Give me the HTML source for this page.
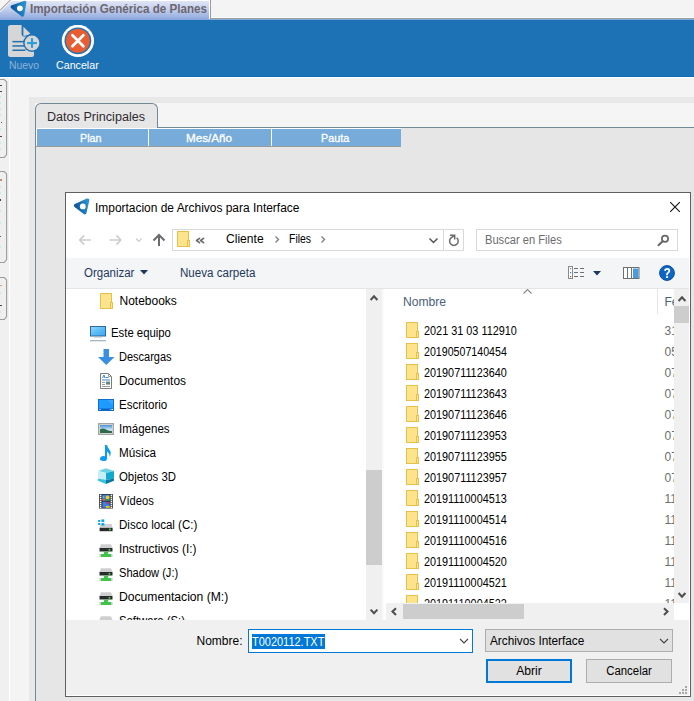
<!DOCTYPE html>
<html><head><meta charset="utf-8"><style>
html,body{margin:0;padding:0;}
body{width:694px;height:701px;position:relative;overflow:hidden;background:#f4f4f4;font-family:"Liberation Sans", sans-serif;}
.t{position:absolute;white-space:nowrap;line-height:1;}
svg{display:block}
</style></head><body>
<div style="position:absolute;left:0px;top:0px;width:694px;height:18px;background:#f4f4f4"></div>
<div style="position:absolute;left:211px;top:17px;width:483px;height:1px;background:#ffffff"></div>
<div style="position:absolute;left:210px;top:18px;width:484px;height:1px;background:#a19e9a"></div>
<svg style="position:absolute;left:0;top:0" width="212" height="20">
<defs><linearGradient id="tg" x1="0" y1="0" x2="0" y2="1">
<stop offset="0" stop-color="#e3e8f6"/><stop offset="0.5" stop-color="#c0cdec"/><stop offset="1" stop-color="#8ba6dc"/></linearGradient></defs>
<polygon points="0,11 11,0 209,0 209,20 0,20" fill="url(#tg)"/>
<polygon points="0,0 11,0 0,11" fill="#f4f4f4"/>
<line x1="11.5" y1="0.5" x2="209" y2="0.5" stroke="#ffffff" stroke-width="1"/>
<line x1="0.3" y1="11.9" x2="11.9" y2="0.3" stroke="#ffffff" stroke-width="1" opacity="0.8"/>
<line x1="-0.3" y1="10.7" x2="10.7" y2="-0.3" stroke="#7a7a7a" stroke-width="0.9"/>
<rect x="209" y="1" width="1" height="17" fill="#ffffff"/>
<rect x="210" y="0" width="1" height="19" fill="#9d9a97"/>
</svg>
<svg style="position:absolute;left:8px;top:0px" width="22" height="20" viewBox="0 0 22 20">
<defs><linearGradient id="ig1" x1="0" y1="0.2" x2="1" y2="0"><stop offset="0" stop-color="#0b5aa3"/><stop offset="1" stop-color="#2b93cc"/></linearGradient></defs>
<polygon points="4.3,6.9 16.6,2.6 14.5,15" fill="url(#ig1)" stroke="url(#ig1)" stroke-width="3.5" stroke-linejoin="round"/>
<circle cx="11.9" cy="8.3" r="2.9" fill="#fff"/>
</svg>
<div class="t" style="left:30.3px;top:3.42px;font-size:12.5px;color:#6c6670;font-weight:bold;transform:scaleX(0.9298);transform-origin:0 0;">Importación Genérica de Planes</div>
<div style="position:absolute;left:0px;top:19px;width:694px;height:1px;background:#86a8dc"></div>
<div style="position:absolute;left:0px;top:20px;width:694px;height:56px;background:#1d72b5"></div>
<div style="position:absolute;left:0px;top:76px;width:694px;height:1px;background:#1169b0"></div>
<div style="position:absolute;left:0px;top:77px;width:694px;height:1px;background:#ffffff"></div>
<svg style="position:absolute;left:7px;top:24px" width="34" height="34" viewBox="0 0 34 34">
<path d="M3.5 1 H14.6 V10.6 Q14.6 12.4 16.4 12.4 H27 V31 Q27 33 25 33 H3.5 Q1 33 1 30.5 V3.5 Q1 1 3.5 1 Z" fill="#d6d6d6"/>
<path d="M16.4 2.8 L23.3 9.6 Q22 11.2 16.4 12 Z" fill="#d6d6d6"/>
<rect x="5.4" y="16.9" width="12" height="1.5" fill="#1d72b5"/>
<rect x="5.4" y="21.2" width="12" height="1.5" fill="#1d72b5"/>
<rect x="5.4" y="25.5" width="13" height="1.5" fill="#1d72b5"/>
<circle cx="25" cy="19" r="8.9" fill="#1d72b5"/>
<circle cx="25" cy="19" r="7.4" fill="#d6d6d6"/>
<rect x="20.1" y="18" width="9.8" height="2.1" fill="#28a0dc"/>
<rect x="23.95" y="14.1" width="2.1" height="9.8" fill="#28a0dc"/>
</svg>
<div class="t" style="left:8.7px;top:59.69px;font-size:11px;color:#8db3d9;font-weight:normal;transform:scaleX(0.9435);transform-origin:0 0;">Nuevo</div>
<svg style="position:absolute;left:61px;top:25px" width="33" height="33" viewBox="0 0 33 33">
<circle cx="16.9" cy="15.8" r="16.1" fill="#ffffff"/>
<circle cx="16.9" cy="15.8" r="13.4" fill="#1d72b5"/>
<circle cx="16.9" cy="15.8" r="12" fill="#e95d33"/>
<path d="M11.4 10.3 L22.4 21.3 M22.4 10.3 L11.4 21.3" stroke="#fff" stroke-width="2.7" stroke-linecap="round"/>
</svg>
<div class="t" style="left:56.3px;top:59.69px;font-size:11px;color:#ffffff;font-weight:normal;transform:scaleX(0.9698);transform-origin:0 0;">Cancelar</div>
<div style="position:absolute;left:0px;top:78px;width:9px;height:623px;background:#f0f0f0"></div>
<svg style="position:absolute;left:0;top:79px" width="9" height="79"><path d="M-2 0.5 H4.2 L6.6 2.9 V75.6 L4.2 78.5 H-2" fill="#efefef" stroke="#9c9c9c" stroke-width="1.1"/></svg>
<svg style="position:absolute;left:0;top:171px" width="9" height="92"><path d="M-2 0.5 H4.2 L6.6 2.9 V88.6 L4.2 91.5 H-2" fill="#efefef" stroke="#9c9c9c" stroke-width="1.1"/></svg>
<svg style="position:absolute;left:0;top:277px" width="9" height="43"><path d="M-2 0.5 H4.2 L6.6 2.9 V39.6 L4.2 42.5 H-2" fill="#efefef" stroke="#9c9c9c" stroke-width="1.1"/></svg>
<div style="position:absolute;left:9px;top:78px;width:1px;height:623px;background:#ffffff"></div>
<div style="position:absolute;left:0px;top:85px;width:2px;height:1px;background:#454a5a"></div>
<div style="position:absolute;left:0px;top:91px;width:2px;height:1px;background:#454a5a"></div>
<div style="position:absolute;left:1px;top:122px;width:1px;height:1px;background:#6a4a6a"></div>
<div style="position:absolute;left:0px;top:136px;width:2px;height:1px;background:#454a5a"></div>
<div style="position:absolute;left:0px;top:96px;width:1px;height:2px;background:#bdeef0"></div>
<div style="position:absolute;left:0px;top:102px;width:1px;height:2px;background:#bdeef0"></div>
<div style="position:absolute;left:0px;top:108px;width:1px;height:2px;background:#bdeef0"></div>
<div style="position:absolute;left:0px;top:114px;width:1px;height:2px;background:#bdeef0"></div>
<div style="position:absolute;left:0px;top:128px;width:1px;height:2px;background:#bdeef0"></div>
<div style="position:absolute;left:0px;top:142px;width:1px;height:2px;background:#bdeef0"></div>
<div style="position:absolute;left:0px;top:148px;width:1px;height:2px;background:#bdeef0"></div>
<div style="position:absolute;left:0px;top:179px;width:2px;height:2px;background:#c09070"></div>
<div style="position:absolute;left:0px;top:199px;width:1px;height:2px;background:#404a48"></div>
<div style="position:absolute;left:0px;top:186px;width:1px;height:2px;background:#bdeef0"></div>
<div style="position:absolute;left:0px;top:192px;width:1px;height:2px;background:#bdeef0"></div>
<div style="position:absolute;left:0px;top:210px;width:1px;height:2px;background:#bdeef0"></div>
<div style="position:absolute;left:0px;top:222px;width:1px;height:2px;background:#bdeef0"></div>
<div style="position:absolute;left:0px;top:236px;width:1px;height:1px;background:#606060"></div>
<div style="position:absolute;left:0px;top:246px;width:1px;height:2px;background:#bdeef0"></div>
<div style="position:absolute;left:0px;top:285px;width:2px;height:1px;background:#d0a070"></div>
<div style="position:absolute;left:0px;top:305px;width:2px;height:1px;background:#404a5a"></div>
<div style="position:absolute;left:0px;top:292px;width:1px;height:2px;background:#bdeef0"></div>
<div style="position:absolute;left:0px;top:311px;width:1px;height:2px;background:#bdeef0"></div>
<div style="position:absolute;left:29px;top:97px;width:665px;height:604px;background:#e8e8e8"></div>
<div style="position:absolute;left:35px;top:103px;width:659px;height:24px;background:#f5f5f5"></div>
<div style="position:absolute;left:35px;top:127px;width:659px;height:574px;background:#e6e6e6;border-left:1px solid #728a94;border-top:1px solid #728a94"></div>
<div style="position:absolute;left:35px;top:103px;width:123px;height:26px;background:#e6e6e6;border:1px solid #728a94;border-bottom:none;border-radius:6px 6px 0 0;box-sizing:border-box"></div>
<div class="t" style="left:46.5px;top:111.12px;font-size:12.5px;color:#302b33;font-weight:normal;transform:scaleX(1.0076);transform-origin:0 0;">Datos Principales</div>
<div style="position:absolute;left:36px;top:128px;width:365px;height:1px;background:#ffffff"></div>
<div style="position:absolute;left:36px;top:128px;width:1px;height:18px;background:#ffffff"></div>
<div style="position:absolute;left:37px;top:129px;width:364px;height:17px;background:#76abda"></div>
<div style="position:absolute;left:36px;top:146px;width:365px;height:1px;background:#9c9c9c"></div>
<div style="position:absolute;left:148px;top:129px;width:1px;height:17px;background:#ffffff"></div>
<div style="position:absolute;left:271px;top:129px;width:1px;height:17px;background:#ffffff"></div>
<div class="t" style="left:80px;top:132.79px;font-size:11px;color:#ffffff;font-weight:normal;transform:scaleX(0.9804);transform-origin:0 0;-webkit-text-stroke:0.3px #fff">Plan</div>
<div class="t" style="left:186px;top:132.79px;font-size:11px;color:#ffffff;font-weight:normal;transform:scaleX(1.0594);transform-origin:0 0;-webkit-text-stroke:0.3px #fff">Mes/Año</div>
<div class="t" style="left:321.4px;top:132.79px;font-size:11px;color:#ffffff;font-weight:normal;transform:scaleX(0.9809);transform-origin:0 0;-webkit-text-stroke:0.3px #fff">Pauta</div>
<div style="position:absolute;left:65px;top:192px;width:626px;height:505px;background:#f0f0f0;border:1px solid #606060;box-sizing:border-box"></div>
<div style="position:absolute;left:66px;top:193px;width:624px;height:96px;background:#ffffff"></div>
<svg style="position:absolute;left:71px;top:197px" width="22" height="20" viewBox="0 0 22 20">
<defs><linearGradient id="ig2" x1="0" y1="0.2" x2="1" y2="0"><stop offset="0" stop-color="#0b5aa3"/><stop offset="1" stop-color="#2b93cc"/></linearGradient></defs>
<polygon points="4.6,8.6 16.6,3.2 13.8,15.6" fill="url(#ig2)" stroke="url(#ig2)" stroke-width="3.5" stroke-linejoin="round"/>
<circle cx="11.8" cy="9.4" r="2.9" fill="#fff"/>
</svg>
<div class="t" style="left:94.6px;top:201.84px;font-size:12px;color:#000;font-weight:normal;transform:scaleX(0.9949);transform-origin:0 0;">Importacion de Archivos para Interface</div>
<svg style="position:absolute;left:669px;top:201px" width="13" height="13"><path d="M1.2 1.2 L10.8 10.8 M10.8 1.2 L1.2 10.8" stroke="#111" stroke-width="1.1"/></svg>
<svg style="position:absolute;left:76px;top:232px" width="96" height="16">
<path d="M3.5 8 H15 M3.5 8 L8.2 3.3 M3.5 8 L8.2 12.7" stroke="#cdcdcd" stroke-width="1.7" fill="none"/>
<path d="M45 8 H33.5 M45 8 L40.3 3.3 M45 8 L40.3 12.7" stroke="#cdcdcd" stroke-width="1.7" fill="none"/>
<path d="M60 6.5 L62.8 9.3 L65.6 6.5" stroke="#cdcdcd" stroke-width="1.2" fill="none"/>
<path d="M83 14 V3.5 M77.5 8.5 L83 3 L88.5 8.5" stroke="#6b6b6b" stroke-width="2" fill="none"/>
</svg>
<div style="position:absolute;left:172px;top:229px;width:292px;height:22px;background:#fff;border:1px solid #d9d9d9;box-sizing:border-box"></div>
<div style="position:absolute;left:443px;top:230px;width:1px;height:20px;background:#d9d9d9"></div>
<svg style="position:absolute;left:177px;top:231px" width="15" height="17" viewBox="0 0 15 17">
<rect x="0.5" y="0.5" width="11" height="15" fill="#fde38c" stroke="#e6c14a" stroke-width="1"/>
<rect x="10.5" y="9.5" width="2" height="6" fill="#fde38c" stroke="#e6c14a" stroke-width="1"/>
</svg>
<svg style="position:absolute;left:195px;top:237px" width="10" height="8"><path d="M4.5 1.3 L1.5 3.5 L4.5 5.7 M8.6 1.3 L5.6 3.5 L8.6 5.7" stroke="#6a6a6a" stroke-width="1.6" stroke-linejoin="round" stroke-linecap="round" fill="none"/></svg>
<div class="t" style="left:226.2px;top:232.84px;font-size:12px;color:#000;font-weight:normal;transform:scaleX(1.0064);transform-origin:0 0;">Cliente</div>
<svg style="position:absolute;left:274px;top:235px" width="54" height="10">
<path d="M1.5 1.5 L4.5 4.5 L1.5 7.5" stroke="#808080" stroke-width="1.4" fill="none"/>
<path d="M47.5 1.5 L50.5 4.5 L47.5 7.5" stroke="#808080" stroke-width="1.4" fill="none"/>
</svg>
<div class="t" style="left:289.4px;top:232.84px;font-size:12px;color:#000;font-weight:normal;transform:scaleX(0.8720);transform-origin:0 0;">Files</div>
<svg style="position:absolute;left:428px;top:237px" width="12" height="8"><path d="M1.5 1.5 L5.5 5.5 L9.5 1.5" stroke="#555" stroke-width="1.5" fill="none"/></svg>
<svg style="position:absolute;left:447px;top:233px" width="14" height="14" viewBox="0 0 14 14">
<path d="M9.66 4.8 A4.3 4.3 0 1 1 4.14 4.81 L7.4 2.6" stroke="#6b6b6b" stroke-width="1.5" fill="none"/>
<path d="M3 2.3 H7.7 V6.4" stroke="#6b6b6b" stroke-width="1.5" fill="none"/>
</svg>
<div style="position:absolute;left:476px;top:229px;width:202px;height:22px;background:#fff;border:1px solid #d9d9d9;box-sizing:border-box"></div>
<div class="t" style="left:485.2px;top:233.84px;font-size:12px;color:#6d6d6d;font-weight:normal;transform:scaleX(0.9274);transform-origin:0 0;">Buscar en Files</div>
<svg style="position:absolute;left:657px;top:234px" width="13" height="13" viewBox="0 0 13 13">
<circle cx="8" cy="4.7" r="3.1" stroke="#666" stroke-width="1.7" fill="none"/>
<path d="M5.6 7.2 L1.5 11.3" stroke="#666" stroke-width="2" stroke-linecap="round"/>
</svg>
<div style="position:absolute;left:66px;top:258px;width:624px;height:30px;background:#f4f5f7"></div>
<div style="position:absolute;left:66px;top:288px;width:624px;height:1px;background:#e3e5e8"></div>
<div class="t" style="left:84.4px;top:266.84px;font-size:12px;color:#1e395b;font-weight:normal;transform:scaleX(0.9566);transform-origin:0 0;">Organizar</div>
<svg style="position:absolute;left:140px;top:270px" width="9" height="5"><path d="M0 0 H8 L4 4.5 Z" fill="#1e395b"/></svg>
<div class="t" style="left:179.5px;top:266.84px;font-size:12px;color:#1e395b;font-weight:normal;transform:scaleX(0.9661);transform-origin:0 0;">Nueva carpeta</div>
<svg style="position:absolute;left:568px;top:266px" width="17" height="13" viewBox="0 0 17 13">
<rect x="0.5" y="0.5" width="4" height="12" fill="#fff" stroke="#8a8a8a" stroke-width="1"/>
<rect x="2" y="2" width="1.2" height="1.2" fill="#888"/>
<rect x="2" y="6" width="1.2" height="1.2" fill="#2f7fd0"/>
<rect x="2" y="10" width="1.2" height="1.2" fill="#d03030"/>
<rect x="6" y="2" width="4" height="1" fill="#707070"/><rect x="12" y="2" width="4" height="1" fill="#707070"/>
<rect x="6" y="6" width="4" height="1" fill="#707070"/><rect x="12" y="6" width="4" height="1" fill="#707070"/>
<rect x="6" y="10" width="4" height="1" fill="#707070"/><rect x="12" y="10" width="4" height="1" fill="#707070"/>
</svg>
<svg style="position:absolute;left:593px;top:271px" width="9" height="5"><path d="M0 0 H8 L4 4.5 Z" fill="#1e395b"/></svg>
<svg style="position:absolute;left:623px;top:267px" width="17" height="12" viewBox="0 0 17 12">
<rect x="0.5" y="0.5" width="15.5" height="11" fill="#fff" stroke="#707070" stroke-width="1"/>
<rect x="4" y="1" width="1" height="10" fill="#707070"/>
<rect x="8" y="1" width="1" height="10" fill="#707070"/>
<rect x="10" y="1.5" width="5.5" height="9.5" fill="#4a9ae0"/>
</svg>
<svg style="position:absolute;left:659px;top:265px" width="16" height="16" viewBox="0 0 16 16">
<circle cx="8" cy="8" r="7.4" fill="#0d66c6" stroke="#0a4c9c" stroke-width="1"/>
<path d="M6 5.8 Q6.2 3.9 8.2 3.9 Q10.3 3.9 10.3 5.8 Q10.3 7 9.1 7.7 Q8 8.3 8 9.6 V10.2" stroke="#fff" stroke-width="1.8" fill="none"/>
<rect x="7" y="11.2" width="2.1" height="1.8" fill="#fff"/>
</svg>
<div style="position:absolute;left:66px;top:289px;width:300px;height:331px;background:#fff"></div>
<div style="position:absolute;left:366px;top:289px;width:16px;height:331px;background:#f0f0f0"></div>
<div style="position:absolute;left:366px;top:470px;width:16px;height:95px;background:#cdcdcd"></div>
<svg style="position:absolute;left:366px;top:289px" width="16" height="331">
<path d="M4.6 11 L8 7.4 L11.4 11" stroke="#505050" stroke-width="2.1" fill="none"/>
<path d="M4.6 320.6 L8 324.2 L11.4 320.6" stroke="#505050" stroke-width="2.1" fill="none"/>
</svg>
<div style="position:absolute;left:382px;top:289px;width:2px;height:331px;background:#fafafa"></div>
<div style="position:absolute;left:384px;top:289px;width:306px;height:314px;background:#fff"></div>
<div style="position:absolute;left:674px;top:289px;width:16px;height:314px;background:#f0f0f0"></div>
<div style="position:absolute;left:674px;top:306px;width:16px;height:17px;background:#cdcdcd"></div>
<svg style="position:absolute;left:674px;top:289px" width="16" height="314">
<path d="M4.6 12 L8 8.4 L11.4 12" stroke="#505050" stroke-width="2.1" fill="none"/>
<path d="M4.6 304 L8 307.8 L11.4 304" stroke="#505050" stroke-width="2.1" fill="none"/>
</svg>
<div style="position:absolute;left:386px;top:604px;width:288px;height:16px;background:#f0f0f0"></div>
<div style="position:absolute;left:403px;top:604px;width:121px;height:15px;background:#cdcdcd"></div>
<div style="position:absolute;left:674px;top:603px;width:16px;height:17px;background:#fff"></div>
<div style="position:absolute;left:384px;top:603px;width:2px;height:17px;background:#fff"></div>
<svg style="position:absolute;left:386px;top:604px" width="288" height="16">
<path d="M10 4.2 L6.5 7.6 L10 11" stroke="#505050" stroke-width="2.1" fill="none"/>
<path d="M278 4.2 L281.5 7.6 L278 11" stroke="#505050" stroke-width="2.1" fill="none"/>
</svg>
<div style="position:absolute;left:384px;top:289px;width:290px;height:314px;overflow:hidden">
<div class="t" style="left:18.600000000000023px;top:6.84px;font-size:12px;color:#4c607a;font-weight:normal;transform:scaleX(1.0097);transform-origin:0 0;">Nombre</div>
<svg style="position:absolute;left:138px;top:-1px" width="11" height="7"><path d="M1.5 5.5 L5.5 1.5 L9.5 5.5" stroke="#8a8a8a" stroke-width="1.1" fill="none"/></svg>
<div style="position:absolute;left:273px;top:0px;width:1px;height:25px;background:#e5e5e5"></div>
<div class="t" style="left:280.5px;top:6.84px;font-size:12px;color:#4c607a;font-weight:normal;">Fe</div>
<svg style="position:absolute;left:22px;top:33px" width="15" height="17" viewBox="0 0 15 17">
<rect x="0.5" y="0.5" width="11" height="15" fill="#fde38c" stroke="#e6c14a" stroke-width="1"/>
<rect x="10.5" y="9.5" width="2" height="6" fill="#fde38c" stroke="#e6c14a" stroke-width="1"/>
</svg>
<div class="t" style="left:40.19999999999999px;top:36.44px;font-size:12px;color:#000;font-weight:normal;transform:scaleX(0.9059);transform-origin:0 0;">2021 31 03 112910</div>
<div class="t" style="left:280.5px;top:36.44px;font-size:12px;color:#6d6d6d;font-weight:normal;">31</div>
<svg style="position:absolute;left:22px;top:54px" width="15" height="17" viewBox="0 0 15 17">
<rect x="0.5" y="0.5" width="11" height="15" fill="#fde38c" stroke="#e6c14a" stroke-width="1"/>
<rect x="10.5" y="9.5" width="2" height="6" fill="#fde38c" stroke="#e6c14a" stroke-width="1"/>
</svg>
<div class="t" style="left:40.19999999999999px;top:57.44px;font-size:12px;color:#000;font-weight:normal;transform:scaleX(0.8862);transform-origin:0 0;">20190507140454</div>
<div class="t" style="left:280.5px;top:57.44px;font-size:12px;color:#6d6d6d;font-weight:normal;">05</div>
<svg style="position:absolute;left:22px;top:75px" width="15" height="17" viewBox="0 0 15 17">
<rect x="0.5" y="0.5" width="11" height="15" fill="#fde38c" stroke="#e6c14a" stroke-width="1"/>
<rect x="10.5" y="9.5" width="2" height="6" fill="#fde38c" stroke="#e6c14a" stroke-width="1"/>
</svg>
<div class="t" style="left:40.19999999999999px;top:78.44px;font-size:12px;color:#000;font-weight:normal;transform:scaleX(0.9034);transform-origin:0 0;">20190711123640</div>
<div class="t" style="left:280.5px;top:78.44px;font-size:12px;color:#6d6d6d;font-weight:normal;">07</div>
<svg style="position:absolute;left:22px;top:96px" width="15" height="17" viewBox="0 0 15 17">
<rect x="0.5" y="0.5" width="11" height="15" fill="#fde38c" stroke="#e6c14a" stroke-width="1"/>
<rect x="10.5" y="9.5" width="2" height="6" fill="#fde38c" stroke="#e6c14a" stroke-width="1"/>
</svg>
<div class="t" style="left:40.19999999999999px;top:99.44px;font-size:12px;color:#000;font-weight:normal;transform:scaleX(0.9034);transform-origin:0 0;">20190711123643</div>
<div class="t" style="left:280.5px;top:99.44px;font-size:12px;color:#6d6d6d;font-weight:normal;">07</div>
<svg style="position:absolute;left:22px;top:117px" width="15" height="17" viewBox="0 0 15 17">
<rect x="0.5" y="0.5" width="11" height="15" fill="#fde38c" stroke="#e6c14a" stroke-width="1"/>
<rect x="10.5" y="9.5" width="2" height="6" fill="#fde38c" stroke="#e6c14a" stroke-width="1"/>
</svg>
<div class="t" style="left:40.19999999999999px;top:120.44px;font-size:12px;color:#000;font-weight:normal;transform:scaleX(0.9034);transform-origin:0 0;">20190711123646</div>
<div class="t" style="left:280.5px;top:120.44px;font-size:12px;color:#6d6d6d;font-weight:normal;">07</div>
<svg style="position:absolute;left:22px;top:138px" width="15" height="17" viewBox="0 0 15 17">
<rect x="0.5" y="0.5" width="11" height="15" fill="#fde38c" stroke="#e6c14a" stroke-width="1"/>
<rect x="10.5" y="9.5" width="2" height="6" fill="#fde38c" stroke="#e6c14a" stroke-width="1"/>
</svg>
<div class="t" style="left:40.19999999999999px;top:141.44px;font-size:12px;color:#000;font-weight:normal;transform:scaleX(0.9034);transform-origin:0 0;">20190711123953</div>
<div class="t" style="left:280.5px;top:141.44px;font-size:12px;color:#6d6d6d;font-weight:normal;">07</div>
<svg style="position:absolute;left:22px;top:159px" width="15" height="17" viewBox="0 0 15 17">
<rect x="0.5" y="0.5" width="11" height="15" fill="#fde38c" stroke="#e6c14a" stroke-width="1"/>
<rect x="10.5" y="9.5" width="2" height="6" fill="#fde38c" stroke="#e6c14a" stroke-width="1"/>
</svg>
<div class="t" style="left:40.19999999999999px;top:162.44px;font-size:12px;color:#000;font-weight:normal;transform:scaleX(0.9034);transform-origin:0 0;">20190711123955</div>
<div class="t" style="left:280.5px;top:162.44px;font-size:12px;color:#6d6d6d;font-weight:normal;">07</div>
<svg style="position:absolute;left:22px;top:180px" width="15" height="17" viewBox="0 0 15 17">
<rect x="0.5" y="0.5" width="11" height="15" fill="#fde38c" stroke="#e6c14a" stroke-width="1"/>
<rect x="10.5" y="9.5" width="2" height="6" fill="#fde38c" stroke="#e6c14a" stroke-width="1"/>
</svg>
<div class="t" style="left:40.19999999999999px;top:183.44px;font-size:12px;color:#000;font-weight:normal;transform:scaleX(0.9034);transform-origin:0 0;">20190711123957</div>
<div class="t" style="left:280.5px;top:183.44px;font-size:12px;color:#6d6d6d;font-weight:normal;">07</div>
<svg style="position:absolute;left:22px;top:201px" width="15" height="17" viewBox="0 0 15 17">
<rect x="0.5" y="0.5" width="11" height="15" fill="#fde38c" stroke="#e6c14a" stroke-width="1"/>
<rect x="10.5" y="9.5" width="2" height="6" fill="#fde38c" stroke="#e6c14a" stroke-width="1"/>
</svg>
<div class="t" style="left:40.19999999999999px;top:204.44px;font-size:12px;color:#000;font-weight:normal;transform:scaleX(0.9034);transform-origin:0 0;">20191110004513</div>
<div class="t" style="left:280.5px;top:204.44px;font-size:12px;color:#6d6d6d;font-weight:normal;">11</div>
<svg style="position:absolute;left:22px;top:222px" width="15" height="17" viewBox="0 0 15 17">
<rect x="0.5" y="0.5" width="11" height="15" fill="#fde38c" stroke="#e6c14a" stroke-width="1"/>
<rect x="10.5" y="9.5" width="2" height="6" fill="#fde38c" stroke="#e6c14a" stroke-width="1"/>
</svg>
<div class="t" style="left:40.19999999999999px;top:225.44px;font-size:12px;color:#000;font-weight:normal;transform:scaleX(0.9034);transform-origin:0 0;">20191110004514</div>
<div class="t" style="left:280.5px;top:225.44px;font-size:12px;color:#6d6d6d;font-weight:normal;">11</div>
<svg style="position:absolute;left:22px;top:243px" width="15" height="17" viewBox="0 0 15 17">
<rect x="0.5" y="0.5" width="11" height="15" fill="#fde38c" stroke="#e6c14a" stroke-width="1"/>
<rect x="10.5" y="9.5" width="2" height="6" fill="#fde38c" stroke="#e6c14a" stroke-width="1"/>
</svg>
<div class="t" style="left:40.19999999999999px;top:246.44px;font-size:12px;color:#000;font-weight:normal;transform:scaleX(0.9034);transform-origin:0 0;">20191110004516</div>
<div class="t" style="left:280.5px;top:246.44px;font-size:12px;color:#6d6d6d;font-weight:normal;">11</div>
<svg style="position:absolute;left:22px;top:264px" width="15" height="17" viewBox="0 0 15 17">
<rect x="0.5" y="0.5" width="11" height="15" fill="#fde38c" stroke="#e6c14a" stroke-width="1"/>
<rect x="10.5" y="9.5" width="2" height="6" fill="#fde38c" stroke="#e6c14a" stroke-width="1"/>
</svg>
<div class="t" style="left:40.19999999999999px;top:267.44px;font-size:12px;color:#000;font-weight:normal;transform:scaleX(0.9034);transform-origin:0 0;">20191110004520</div>
<div class="t" style="left:280.5px;top:267.44px;font-size:12px;color:#6d6d6d;font-weight:normal;">11</div>
<svg style="position:absolute;left:22px;top:285px" width="15" height="17" viewBox="0 0 15 17">
<rect x="0.5" y="0.5" width="11" height="15" fill="#fde38c" stroke="#e6c14a" stroke-width="1"/>
<rect x="10.5" y="9.5" width="2" height="6" fill="#fde38c" stroke="#e6c14a" stroke-width="1"/>
</svg>
<div class="t" style="left:40.19999999999999px;top:288.44px;font-size:12px;color:#000;font-weight:normal;transform:scaleX(0.9034);transform-origin:0 0;">20191110004521</div>
<div class="t" style="left:280.5px;top:288.44px;font-size:12px;color:#6d6d6d;font-weight:normal;">11</div>
<svg style="position:absolute;left:22px;top:306px" width="15" height="17" viewBox="0 0 15 17">
<rect x="0.5" y="0.5" width="11" height="15" fill="#fde38c" stroke="#e6c14a" stroke-width="1"/>
<rect x="10.5" y="9.5" width="2" height="6" fill="#fde38c" stroke="#e6c14a" stroke-width="1"/>
</svg>
<div class="t" style="left:40.19999999999999px;top:309.44px;font-size:12px;color:#000;font-weight:normal;transform:scaleX(0.9034);transform-origin:0 0;">20191110004522</div>
<div class="t" style="left:280.5px;top:309.44px;font-size:12px;color:#6d6d6d;font-weight:normal;">11</div>
</div>
<div style="position:absolute;left:66px;top:289px;width:300px;height:331px;overflow:hidden">
<svg style="position:absolute;left:34px;top:4px" width="15" height="17" viewBox="0 0 15 17">
<rect x="0.5" y="0.5" width="11" height="15" fill="#fde38c" stroke="#e6c14a" stroke-width="1"/>
<rect x="10.5" y="9.5" width="2" height="6" fill="#fde38c" stroke="#e6c14a" stroke-width="1"/>
</svg>
<div class="t" style="left:53.5px;top:5.84px;font-size:12px;color:#000;font-weight:normal;">Notebooks</div>
<svg style="position:absolute;left:24px;top:37px" width="17" height="16" viewBox="0 0 17 16">
<defs><linearGradient id="pcg" x1="0" y1="0" x2="1" y2="1"><stop offset="0" stop-color="#9ad6fc"/><stop offset="0.5" stop-color="#5bbdf6"/><stop offset="1" stop-color="#3aa6ee"/></linearGradient></defs>
<rect x="0.5" y="0.5" width="15" height="9.5" fill="url(#pcg)" stroke="#2c6b9c" stroke-width="1"/>
<rect x="4" y="10.5" width="8" height="1" fill="#a9b5be"/>
<rect x="0" y="14" width="16" height="1.3" fill="#a8b6c2"/></svg>
<div class="t" style="left:45.400000000000006px;top:38.44px;font-size:12px;color:#000;font-weight:normal;transform:scaleX(0.9449);transform-origin:0 0;">Este equipo</div>
<svg style="position:absolute;left:31.5px;top:60px" width="17" height="16" viewBox="0 0 17 16">
<path d="M5.5 0 H11 V8 H16.5 L8.25 16 L0 8 H5.5 Z" fill="#3a8fe0"/></svg>
<div class="t" style="left:53.400000000000006px;top:62.44px;font-size:12px;color:#000;font-weight:normal;transform:scaleX(0.9170);transform-origin:0 0;">Descargas</div>
<svg style="position:absolute;left:34px;top:84px" width="13" height="17" viewBox="0 0 13 17">
<path d="M0.5 0.5 H8.5 L11.5 3.5 V15.5 H0.5 Z" fill="#fff" stroke="#7c7c7c" stroke-width="1"/>
<path d="M8.5 0.5 V3.5 H11.5" fill="none" stroke="#9a9a9a" stroke-width="1"/>
<path d="M2.5 5 L4 2 L5 5" fill="none" stroke="#3b86d6" stroke-width="1"/><rect x="5.5" y="4" width="3" height="1" fill="#3b86d6"/>
<rect x="2" y="6.5" width="8" height="1" fill="#3b86d6"/>
<rect x="2" y="9" width="3" height="1" fill="#9a9a9a"/><rect x="6" y="8.6" width="4" height="3" fill="#5b8a7a"/>
<rect x="2" y="11" width="3" height="1" fill="#9a9a9a"/><rect x="2" y="13" width="8" height="1" fill="#9a9a9a"/></svg>
<div class="t" style="left:53.400000000000006px;top:86.44px;font-size:12px;color:#000;font-weight:normal;transform:scaleX(0.9944);transform-origin:0 0;">Documentos</div>
<svg style="position:absolute;left:32px;top:110px" width="16" height="12" viewBox="0 0 16 12">
<rect x="0.5" y="0.5" width="15" height="11" fill="#1f9bff" stroke="#0b70d2" stroke-width="1"/>
<path d="M9 1 L15 1 L15 6 Z" fill="#ffffff" opacity="0.12"/>
<rect x="1" y="9.5" width="14" height="2" fill="#0c62bf"/>
<rect x="1.5" y="10" width="1" height="1" fill="#fff"/><rect x="12.5" y="10" width="1" height="1" fill="#fff"/><rect x="14" y="10" width="1" height="1" fill="#fff"/></svg>
<div class="t" style="left:53.400000000000006px;top:110.44px;font-size:12px;color:#000;font-weight:normal;transform:scaleX(0.9657);transform-origin:0 0;">Escritorio</div>
<svg style="position:absolute;left:32px;top:134px" width="16" height="12" viewBox="0 0 16 12">
<defs><linearGradient id="skyg" x1="0" y1="0" x2="0" y2="1"><stop offset="0" stop-color="#4a90d8"/><stop offset="0.6" stop-color="#cfe6f5"/></linearGradient></defs>
<rect x="0.75" y="0.75" width="14.5" height="10.5" fill="#fff" stroke="#a4a4a4" stroke-width="1.5"/>
<rect x="2" y="2" width="12" height="8" fill="url(#skyg)"/>
<path d="M2 6.5 Q5 4.5 8 6.5 Q11 8 14 8 V10 H2 Z" fill="#2f6a4a"/></svg>
<div class="t" style="left:53.400000000000006px;top:134.44px;font-size:12px;color:#000;font-weight:normal;transform:scaleX(0.9601);transform-origin:0 0;">Imágenes</div>
<svg style="position:absolute;left:33px;top:156px" width="13" height="17" viewBox="0 0 13 17">
<path d="M6 0 H8 Q8.4 2.2 10.2 4.2 Q12.2 6.6 11.6 9.6 Q11.3 11 10.6 11.8 Q10.6 8.2 8 6.6 V13.4 Q8 16 4.6 16 Q1 16 1 13.8 Q1 11 4.6 10.9 Q5.4 10.9 6 11.2 Z" fill="#0b9bf3"/></svg>
<div class="t" style="left:53.400000000000006px;top:158.44px;font-size:12px;color:#000;font-weight:normal;transform:scaleX(0.9733);transform-origin:0 0;">Música</div>
<svg style="position:absolute;left:32px;top:179px" width="17" height="17" viewBox="0 0 17 17">
<path d="M8 0.3 L16 3 L8 5 L0 3 Z" fill="#6fd3e3"/>
<path d="M0 3 L8 5 V11.8 L0 10.8 Z" fill="#c8eff5"/>
<path d="M8 5 L16 3 V10.8 L8 11.8 Z" fill="#14a8cf"/>
<path d="M0 10.8 L8 11.8 V16 L0 12.8 Z" fill="#33c3dc"/>
<path d="M8 11.8 L16 10.8 V12.8 L8 16 Z" fill="#0a78a0"/></svg>
<div class="t" style="left:53.400000000000006px;top:182.44px;font-size:12px;color:#000;font-weight:normal;transform:scaleX(0.9495);transform-origin:0 0;">Objetos 3D</div>
<svg style="position:absolute;left:33.2px;top:205px" width="14" height="15" viewBox="0 0 14 15">
<rect x="0" y="0" width="14" height="14.6" fill="#4a4a4a"/>
<rect x="3" y="0.5" width="8" height="13.6" fill="#1a1a1a"/>
<rect x="3.3" y="0.8" width="7.4" height="5.8" fill="#3f7fe0"/><rect x="3.3" y="7.6" width="7.4" height="6.2" fill="#3f7fe0"/>
<circle cx="8.6" cy="3.4" r="1.9" fill="#e8d020"/>
<rect x="3.3" y="5" width="2.8" height="1.6" fill="#e8603a"/><rect x="6.6" y="5.2" width="4.1" height="1.4" fill="#2e9a3e"/>
<rect x="3.6" y="2.6" width="1.6" height="0.9" fill="#d8e090"/>
<rect x="7.2" y="8" width="3.3" height="1.8" fill="#a03a80"/><rect x="6.8" y="12" width="3.9" height="1.8" fill="#e8c820"/>
<rect x="0.9" y="0.8" width="1.4" height="1.3" fill="#fff"/><rect x="11.7" y="0.8" width="1.4" height="1.3" fill="#fff"/><rect x="0.9" y="2.8" width="1.4" height="1.3" fill="#fff"/><rect x="11.7" y="2.8" width="1.4" height="1.3" fill="#fff"/><rect x="0.9" y="4.8" width="1.4" height="1.3" fill="#fff"/><rect x="11.7" y="4.8" width="1.4" height="1.3" fill="#fff"/><rect x="0.9" y="6.8" width="1.4" height="1.3" fill="#fff"/><rect x="11.7" y="6.8" width="1.4" height="1.3" fill="#fff"/><rect x="0.9" y="8.8" width="1.4" height="1.3" fill="#fff"/><rect x="11.7" y="8.8" width="1.4" height="1.3" fill="#fff"/><rect x="0.9" y="10.8" width="1.4" height="1.3" fill="#fff"/><rect x="11.7" y="10.8" width="1.4" height="1.3" fill="#fff"/><rect x="0.9" y="12.8" width="1.4" height="1.3" fill="#fff"/><rect x="11.7" y="12.8" width="1.4" height="1.3" fill="#fff"/></svg>
<div class="t" style="left:53.2px;top:206.44px;font-size:12px;color:#000;font-weight:normal;transform:scaleX(0.9288);transform-origin:0 0;">Vídeos</div>
<svg style="position:absolute;left:31.700000000000003px;top:230px" width="16" height="14" viewBox="0 0 16 14">
<path d="M2.6 5 H13.5 L14.6 8.8 H1.6 Z" fill="#cfd0d3"/>
<rect x="0.1" y="1" width="2.2" height="2" fill="#16a6ee"/><rect x="3.4" y="0.4" width="2.9" height="2.6" fill="#16a6ee"/>
<rect x="0.1" y="4" width="2.2" height="2" fill="#16a6ee"/><rect x="3.4" y="4" width="2.9" height="2.6" fill="#16a6ee"/>
<rect x="1.6" y="8.8" width="13" height="3.4" fill="#2a2a2a"/>
<rect x="11" y="9.6" width="1.7" height="1.7" fill="#40e048"/></svg>
<div class="t" style="left:53.2px;top:230.44px;font-size:12px;color:#000;font-weight:normal;transform:scaleX(0.9636);transform-origin:0 0;">Disco local (C:)</div>
<svg style="position:absolute;left:33px;top:255px" width="15" height="14" viewBox="0 0 15 14">
<path d="M1.8 0.3 H12 L13.5 4 H0.5 Z" fill="#cfcfd2"/>
<rect x="0.5" y="4" width="13" height="3.5" fill="#2b2b2b"/>
<rect x="9.6" y="5" width="1.6" height="1.6" fill="#44e04a"/>
<rect x="5" y="7.5" width="4.2" height="2.6" fill="#3ec54a"/>
<rect x="0.5" y="10" width="1.6" height="3" fill="#cdcdcd"/><rect x="12" y="10" width="1.6" height="3" fill="#cdcdcd"/>
<rect x="2" y="10" width="10" height="3" fill="#3ec54a"/></svg>
<div class="t" style="left:53.2px;top:254.44px;font-size:12px;color:#000;font-weight:normal;transform:scaleX(0.9849);transform-origin:0 0;">Instructivos (I:)</div>
<svg style="position:absolute;left:33px;top:279px" width="15" height="14" viewBox="0 0 15 14">
<path d="M1.8 0.3 H12 L13.5 4 H0.5 Z" fill="#cfcfd2"/>
<rect x="0.5" y="4" width="13" height="3.5" fill="#2b2b2b"/>
<rect x="9.6" y="5" width="1.6" height="1.6" fill="#44e04a"/>
<rect x="5" y="7.5" width="4.2" height="2.6" fill="#3ec54a"/>
<rect x="0.5" y="10" width="1.6" height="3" fill="#cdcdcd"/><rect x="12" y="10" width="1.6" height="3" fill="#cdcdcd"/>
<rect x="2" y="10" width="10" height="3" fill="#3ec54a"/></svg>
<div class="t" style="left:53.2px;top:278.44px;font-size:12px;color:#000;font-weight:normal;transform:scaleX(0.9245);transform-origin:0 0;">Shadow (J:)</div>
<svg style="position:absolute;left:33px;top:303px" width="15" height="14" viewBox="0 0 15 14">
<path d="M1.8 0.3 H12 L13.5 4 H0.5 Z" fill="#cfcfd2"/>
<rect x="0.5" y="4" width="13" height="3.5" fill="#2b2b2b"/>
<rect x="9.6" y="5" width="1.6" height="1.6" fill="#44e04a"/>
<rect x="5" y="7.5" width="4.2" height="2.6" fill="#3ec54a"/>
<rect x="0.5" y="10" width="1.6" height="3" fill="#cdcdcd"/><rect x="12" y="10" width="1.6" height="3" fill="#cdcdcd"/>
<rect x="2" y="10" width="10" height="3" fill="#3ec54a"/></svg>
<div class="t" style="left:53.2px;top:302.44px;font-size:12px;color:#000;font-weight:normal;transform:scaleX(1.0116);transform-origin:0 0;">Documentacion (M:)</div>
<svg style="position:absolute;left:33px;top:327px" width="15" height="14" viewBox="0 0 15 14">
<path d="M1.8 0.3 H12 L13.5 4 H0.5 Z" fill="#cfcfd2"/>
<rect x="0.5" y="4" width="13" height="3.5" fill="#2b2b2b"/>
<rect x="9.6" y="5" width="1.6" height="1.6" fill="#44e04a"/>
<rect x="5" y="7.5" width="4.2" height="2.6" fill="#3ec54a"/>
<rect x="0.5" y="10" width="1.6" height="3" fill="#cdcdcd"/><rect x="12" y="10" width="1.6" height="3" fill="#cdcdcd"/>
<rect x="2" y="10" width="10" height="3" fill="#3ec54a"/></svg>
<div class="t" style="left:53.2px;top:326.44px;font-size:12px;color:#000;font-weight:normal;transform:scaleX(0.9424);transform-origin:0 0;">Software (S:)</div>
</div>
<div class="t" style="left:196.5px;top:634.54px;font-size:12px;color:#000;font-weight:normal;">Nombre:</div>
<div style="position:absolute;left:248px;top:629px;width:225px;height:24px;background:#fff;border:1px solid #0078d7;box-sizing:border-box"></div>
<div style="position:absolute;left:252px;top:634px;width:73px;height:15px;background:#0078d7"></div>
<div class="t" style="left:252px;top:635.64px;font-size:12px;color:#fff;font-weight:normal;transform:scaleX(0.9146);transform-origin:0 0;">T0020112.TXT</div>
<svg style="position:absolute;left:459px;top:638px" width="11" height="7"><path d="M1 1 L5 5 L9 1" stroke="#444" stroke-width="1.1" fill="none"/></svg>
<div style="position:absolute;left:485px;top:629px;width:188px;height:23px;background:#e1e1e1;border:1px solid #adadad;box-sizing:border-box"></div>
<div class="t" style="left:489.5px;top:635.04px;font-size:12px;color:#000;font-weight:normal;transform:scaleX(0.9818);transform-origin:0 0;">Archivos Interface</div>
<svg style="position:absolute;left:659px;top:638px" width="11" height="7"><path d="M1 1 L5 5 L9 1" stroke="#444" stroke-width="1.1" fill="none"/></svg>
<div style="position:absolute;left:486px;top:659px;width:86px;height:24px;background:#e1e1e1;border:2px solid #0078d7;box-sizing:border-box"></div>
<div class="t" style="left:486px;top:664.84px;font-size:12px;color:#000;font-weight:normal;width:86px;transform:scaleX(1.0101);transform-origin:50% 0;text-align:center">Abrir</div>
<div style="position:absolute;left:586px;top:659px;width:86px;height:24px;background:#e1e1e1;border:1px solid #adadad;box-sizing:border-box"></div>
<div class="t" style="left:586px;top:664.84px;font-size:12px;color:#000;font-weight:normal;width:86px;transform:scaleX(0.9494);transform-origin:50% 0;text-align:center">Cancelar</div>
<div style="position:absolute;left:685px;top:686px;width:2px;height:2px;background:#a8a8a8"></div>
<div style="position:absolute;left:682px;top:689px;width:2px;height:2px;background:#a8a8a8"></div>
<div style="position:absolute;left:685px;top:689px;width:2px;height:2px;background:#a8a8a8"></div>
<div style="position:absolute;left:679px;top:692px;width:2px;height:2px;background:#a8a8a8"></div>
<div style="position:absolute;left:682px;top:692px;width:2px;height:2px;background:#a8a8a8"></div>
<div style="position:absolute;left:685px;top:692px;width:2px;height:2px;background:#a8a8a8"></div>
<div style="position:absolute;left:66px;top:695px;width:624px;height:1px;background:#fff"></div>
<div style="position:absolute;left:689px;top:193px;width:1px;height:503px;background:#fff"></div>
</body></html>
